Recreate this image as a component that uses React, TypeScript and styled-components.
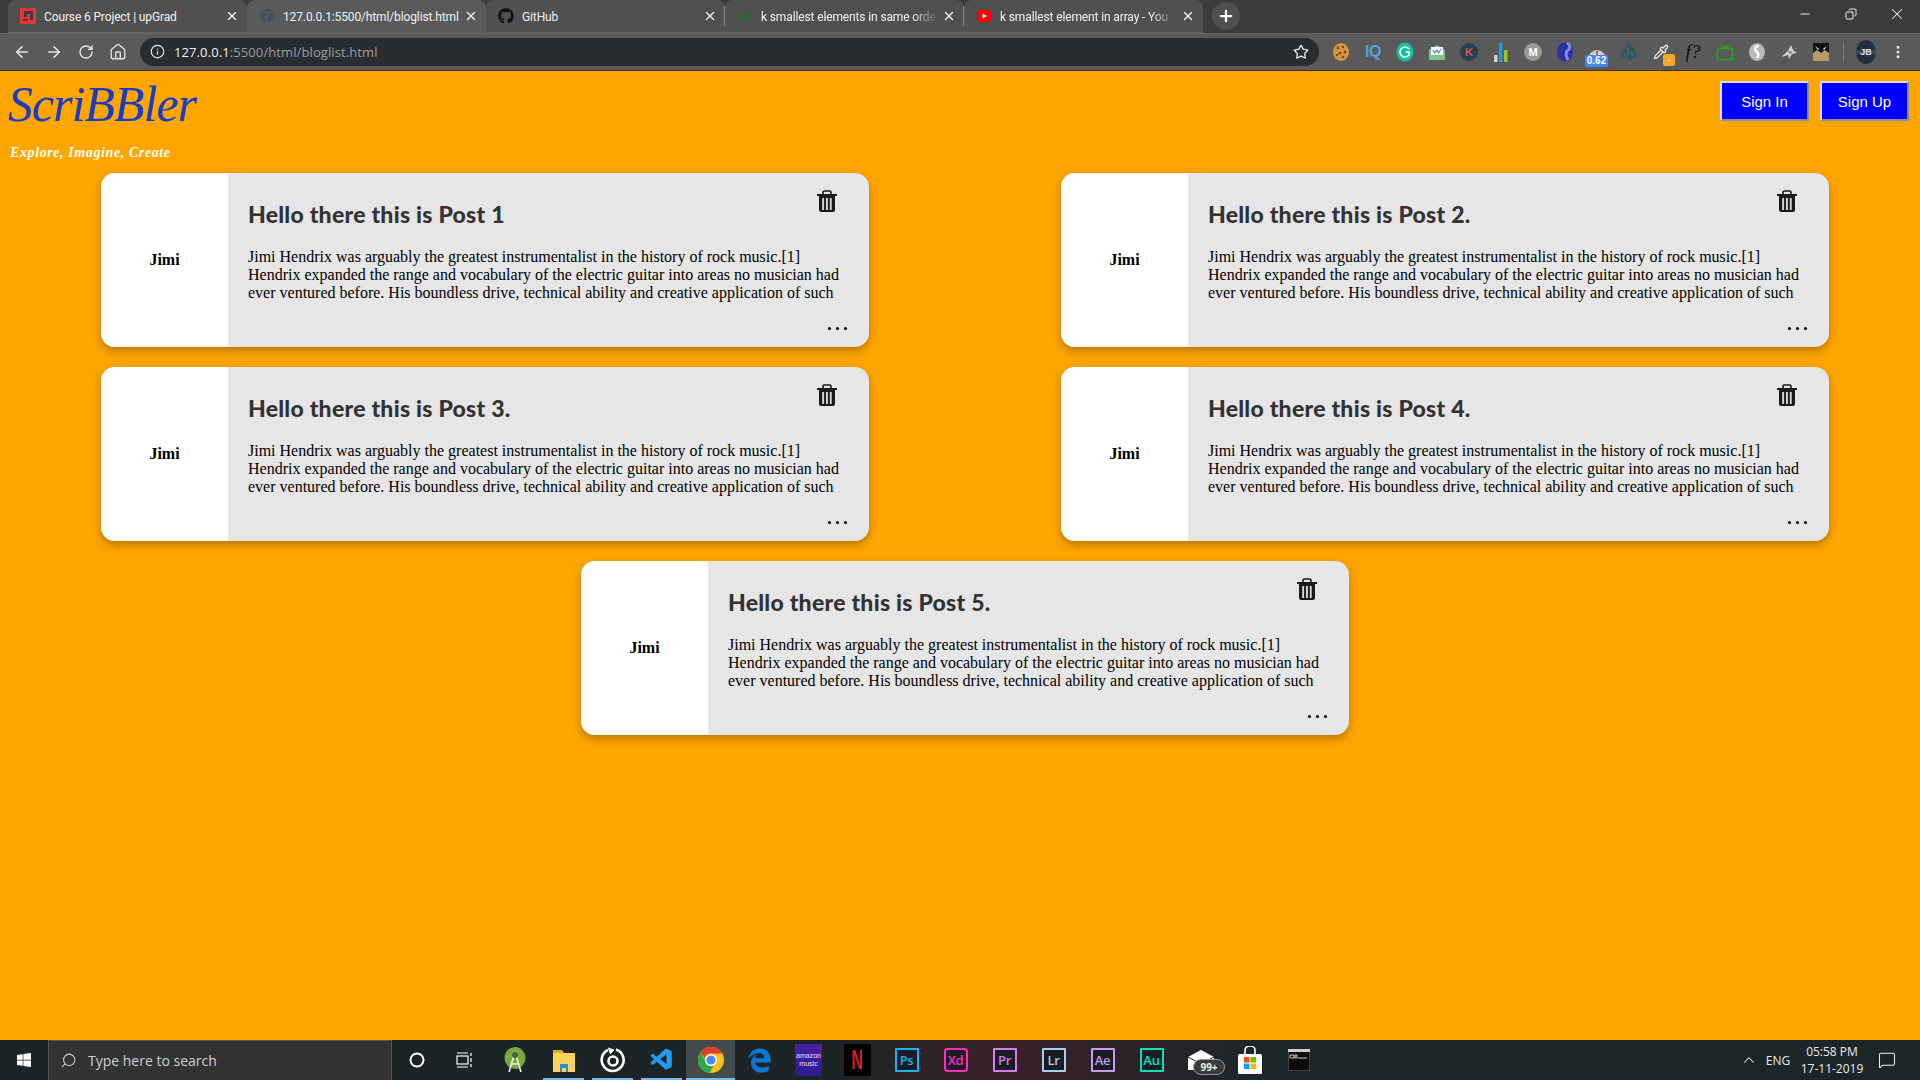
import React from "react";
import styled, { createGlobalStyle } from "styled-components";
import { FaGithub, FaWindows, FaEdgeLegacy } from "react-icons/fa";
import { VscVscode } from "react-icons/vsc";
import {
  ArrowLeft,
  ArrowRight,
  ChevronUp,
  Copy,
  EllipsisVertical,
  Home,
  Info,
  Minus,
  MessageSquare,
  Pipette,
  Plus,
  Recycle,
  RotateCw,
  Search,
  Star,
  Tv,
  X,
} from "lucide-react";

const UI_FONT = `"Open Sans", "Noto Sans", sans-serif`;

const GlobalStyle = createGlobalStyle`
  html, body {
    margin: 0;
    padding: 0;
    overflow: hidden;
    background: #ffa500;
  }
  * {
    box-sizing: border-box;
  }
`;

const Screen = styled.div`
  width: 1920px;
  height: 1080px;
  display: flex;
  flex-direction: column;
`;

/* browser chrome */
const TabStrip = styled.div`
  height: 33px;
  flex-shrink: 0;
  display: flex;
  align-items: stretch;
  padding-left: 8px;
  background: #3c3c3c;
`;

const Tab = styled.div<{ $active?: boolean }>`
  position: relative;
  width: 239px;
  display: flex;
  align-items: center;
  gap: 4px;
  padding: 0 8px 0 12px;
  border-radius: 8px 8px 0 0;
  background: ${({ $active }) => ($active ? "#5a5a5a" : "#505050")};
  border-bottom: 1px solid ${({ $active }) => ($active ? "#5a5a5a" : "#666")};
`;

const TabLabel = styled.span<{ $fade?: boolean }>`
  flex: 1;
  margin-left: 4px;
  padding-top: 2px;
  overflow: hidden;
  white-space: nowrap;
  font-family: Roboto, sans-serif;
  font-size: 12px;
  letter-spacing: -0.13px;
  color: #f2f2f2;
  ${({ $fade }) =>
    $fade &&
    `mask-image: linear-gradient(to right, #000 85%, transparent 100%);`}
`;

const TabDivider = styled.span`
  position: absolute;
  right: 0;
  top: 6px;
  bottom: 6px;
  width: 1px;
  background: #8a8a8a;
`;

const TabIcon = styled.span`
  width: 16px;
  height: 16px;
  flex-shrink: 0;
  display: flex;
  align-items: center;
  justify-content: center;
  color: #111;
`;

const GfgMark = styled.span`
  font-family: "Liberation Sans", sans-serif;
  font-size: 10px;
  font-weight: 700;
  letter-spacing: -1px;
  color: #1d6b3a;
`;

const NewTab = styled.div`
  width: 28px;
  height: 28px;
  margin: 2px 0 0 9px;
  border-radius: 50%;
  background: #505050;
  display: flex;
  align-items: center;
  justify-content: center;
  color: #fff;
`;

const WindowControls = styled.div`
  margin-left: auto;
  display: flex;
  color: #e8e8e8;
`;

const WindowButton = styled.div`
  width: 46px;
  display: flex;
  align-items: center;
  justify-content: center;
  padding-bottom: 5px;
`;

const Toolbar = styled.div`
  height: 38px;
  flex-shrink: 0;
  display: flex;
  align-items: center;
  padding: 0 6px 1px 6px;
  background: #5a5a5a;
  border-top: 1px solid #666;
  border-bottom: 1px solid #333;
`;

const NavButton = styled.div`
  width: 32px;
  display: flex;
  justify-content: center;
  color: #e4e4e4;
`;

const Omnibox = styled.div`
  width: 1179px;
  height: 28px;
  margin-left: 6px;
  padding: 0 10px 0 10px;
  display: flex;
  align-items: center;
  border-radius: 14px;
  background: #292d30;
  color: #e8e8e8;
`;

const UrlText = styled.span`
  margin-left: 9px;
  font-family: ${UI_FONT};
  font-size: 13px;
  letter-spacing: 0.1px;
  color: #f1f1f1;
`;

const UrlMuted = styled.span`
  color: #9a9ea1;
`;

const StarButton = styled.span`
  margin-left: auto;
  display: flex;
`;

const Extensions = styled.div`
  display: flex;
  align-items: center;
  margin-left: 6px;
`;

const Ext = styled.div`
  position: relative;
  width: 32px;
  height: 28px;
  display: flex;
  align-items: center;
  justify-content: center;
`;

const ExtDivider = styled.span`
  width: 1px;
  height: 20px;
  margin: 0 6px 0 6px;
  background: #7a7a7a;
`;

const ExtLetter = styled.span<{ $color: string; $bg?: string }>`
  width: 18px;
  height: 18px;
  display: flex;
  align-items: center;
  justify-content: center;
  border-radius: 50%;
  font-family: "Liberation Sans", sans-serif;
  font-size: 11px;
  font-weight: 700;
  color: ${({ $color }) => $color};
  background: ${({ $bg }) => $bg || "transparent"};
`;

const IqMark = styled.span`
  font-family: "Liberation Sans", sans-serif;
  font-size: 16px;
  font-weight: 700;
  letter-spacing: -0.5px;
  color: #55a2db;
`;

const FormulaMark = styled.span`
  font-family: "Liberation Serif", serif;
  font-style: italic;
  font-size: 19px;
  color: #111;
`;

const SpeedBadge = styled.span`
  position: absolute;
  left: 4px;
  bottom: -1px;
  width: 23px;
  height: 12px;
  border-radius: 2px;
  background: #4285f4;
  color: #fff;
  font-family: "Liberation Sans", sans-serif;
  font-size: 10px;
  font-weight: 700;
  line-height: 12px;
  text-align: center;
`;

const DashBadge = styled.span`
  position: absolute;
  right: 2px;
  bottom: 0;
  width: 12px;
  height: 12px;
  border-radius: 2px;
  background: #f5a623;
  color: #fff;
  font-family: "Liberation Sans", sans-serif;
  font-size: 10px;
  line-height: 12px;
  text-align: center;
`;

/* the page itself */
const Page = styled.main`
  flex: 1;
  min-height: 0;
  background: #ffa500;
`;

const Header = styled.header`
  height: 102px;
  display: flex;
  justify-content: space-between;
  align-items: flex-start;
  padding: 0 11px 0 8px;
`;

const Brand = styled.div`
  display: flex;
  flex-direction: column;
`;

const Logo = styled.h1`
  margin: 0;
  height: 64px;
  font-family: "Liberation Serif", serif;
  font-style: italic;
  font-weight: 400;
  font-size: 50px;
  line-height: 66px;
  letter-spacing: -1px;
  color: #1a3bc4;
`;

const Tagline = styled.p`
  margin: 8px 0 0 2px;
  font-family: "Liberation Serif", serif;
  font-style: italic;
  font-weight: 700;
  font-size: 14px;
  line-height: 20px;
  letter-spacing: 0.6px;
  color: #fff;
`;

const AuthButtons = styled.div`
  display: flex;
  gap: 11px;
  padding-top: 10px;
`;

const AuthButton = styled.button`
  width: 89px;
  height: 40px;
  padding: 0;
  background: #0000ff;
  color: #fff;
  border: 2px solid;
  border-color: #dcdcdc #8f8f8f #8f8f8f #dcdcdc;
  font-family: "Liberation Sans", sans-serif;
  font-size: 15px;
`;

const PostGrid = styled.section`
  display: flex;
  flex-wrap: wrap;
  justify-content: center;
  gap: 20px 192px;
  padding-left: 10px;
`;

const Card = styled.article`
  width: 768px;
  height: 174px;
  display: flex;
  overflow: hidden;
  border-radius: 14px;
  background: #e6e6e6;
  box-shadow: 0 4px 10px rgba(0, 0, 0, 0.28);
`;

const Author = styled.div`
  width: 127px;
  flex-shrink: 0;
  display: flex;
  align-items: center;
  justify-content: center;
  background: #fff;
  font-family: "Liberation Serif", serif;
  font-weight: 700;
  font-size: 16px;
  color: #000;
`;

const CardBody = styled.div`
  flex: 1;
  min-width: 0;
  display: flex;
  flex-direction: column;
  padding: 17px 22px 17px 20px;
`;

const CardHead = styled.div`
  display: flex;
  justify-content: space-between;
  align-items: flex-start;
  padding-right: 10px;
`;

const Title = styled.h2`
  margin: 11px 0 0;
  font-family: Lato, sans-serif;
  font-weight: 900;
  font-size: 23px;
  line-height: 27px;
  letter-spacing: 0.25px;
  color: #333;
`;

const Excerpt = styled.p`
  width: 600px;
  margin: 20px 0 0;
  font-family: "Liberation Serif", serif;
  font-size: 16px;
  line-height: 18px;
  color: #000;
`;

const DotRow = styled.div`
  margin-top: auto;
  display: flex;
  justify-content: flex-end;
  gap: 5px;
`;

const Dot = styled.span`
  width: 3px;
  height: 3px;
  border-radius: 50%;
  background: #000;
`;

/* windows taskbar */
const Taskbar = styled.footer`
  height: 40px;
  flex-shrink: 0;
  display: flex;
  align-items: stretch;
  background: linear-gradient(
    to right,
    #1c2426 0%,
    #1c2426 44%,
    #3a2128 52%,
    #33222a 56%,
    #1c2629 66%,
    #1c2629 100%
  );
  color: #fff;
`;

const StartButton = styled.div`
  width: 48px;
  display: flex;
  align-items: center;
  justify-content: center;
`;

const SearchBox = styled.div`
  width: 344px;
  display: flex;
  align-items: center;
  gap: 11px;
  padding-left: 11px;
  background: #333;
  border: 1px solid #565656;
  border-bottom: none;
  font-family: ${UI_FONT};
  font-size: 14px;
  color: #d0d0d0;
`;

const TaskItem = styled.div<{ $running?: boolean; $active?: boolean }>`
  position: relative;
  width: 49px;
  display: flex;
  align-items: center;
  justify-content: center;
  background: ${({ $active }) => ($active ? "rgba(255,255,255,0.18)" : "transparent")};
  &::after {
    content: "";
    display: ${({ $running }) => ($running ? "block" : "none")};
    position: absolute;
    left: ${({ $active }) => ($active ? "0" : "4px")};
    right: ${({ $active }) => ($active ? "0" : "4px")};
    bottom: 0;
    height: 2px;
    background: #76b9ed;
  }
`;

const TaskViewSlot = styled.span`
  display: flex;
  margin-right: 4px;
`;

const AdobeTile = styled.span<{ $color: string }>`
  width: 24px;
  height: 24px;
  display: flex;
  align-items: center;
  justify-content: center;
  border: 2px solid ${({ $color }) => $color};
  border-radius: ${({ $color }) => ($color === "#ff2bc2" ? "4px" : "1px")};
  background: #1a1c24;
  color: ${({ $color }) => $color};
  font-family: ${UI_FONT};
  font-size: 13px;
  font-weight: 600;
  letter-spacing: -0.3px;
`;

const MusicTile = styled.span`
  width: 27px;
  height: 32px;
  display: flex;
  flex-direction: column;
  align-items: center;
  justify-content: center;
  background: linear-gradient(#4a1fa8, #2c1a8a);
  color: #e6e0ff;
  font-family: "Liberation Sans", sans-serif;
  font-size: 7px;
  line-height: 8px;
`;

const NetflixTile = styled.span`
  width: 27px;
  height: 32px;
  display: flex;
  align-items: center;
  justify-content: center;
  background: #000;
`;

const NetflixLetter = styled.span`
  display: inline-block;
  transform: scale(0.62, 1.05);
  color: #d81f26;
  font-family: "Liberation Sans", sans-serif;
  font-size: 26px;
  font-weight: 700;
`;

const MailBadge = styled.span`
  position: absolute;
  left: 17px;
  top: 19px;
  width: 32px;
  height: 16px;
  border-radius: 8px;
  border: 1px solid #9a9a9a;
  background: #3a3a3a;
  color: #eee;
  font-family: ${UI_FONT};
  font-size: 10px;
  font-weight: 700;
  line-height: 14px;
  text-align: center;
`;

const Tray = styled.div`
  margin-left: auto;
  display: flex;
  align-items: center;
  padding-right: 15px;
  font-family: ${UI_FONT};
  font-size: 12px;
  color: #ececec;
`;

const TrayIcon = styled.span`
  width: 24px;
  display: flex;
  justify-content: center;
`;

const TrayLang = styled.span`
  width: 34px;
  text-align: center;
`;

const Clock = styled.div`
  width: 74px;
  text-align: center;
  line-height: 17px;
`;

const NotifyIcon = styled.span`
  width: 36px;
  display: flex;
  justify-content: center;
`;

const TrashIcon = () => (
  <svg width="20" height="22" viewBox="0 0 20 22">
    <path d="M6 4V2.4C6 1.6 6.6 1 7.4 1h5.2c.8 0 1.4.6 1.4 1.4V4" fill="none" stroke="#1a1a1a" strokeWidth="1.6" />
    <rect x="0" y="4" width="20" height="2" fill="#1a1a1a" />
    <path d="M2 6h16v14c0 1.1-.9 2-2 2H4c-1.1 0-2-.9-2-2z" fill="#1a1a1a" />
    <rect x="5.2" y="8" width="1.9" height="12" fill="#d8d8d8" />
    <rect x="9" y="8" width="1.9" height="12" fill="#d8d8d8" />
    <rect x="12.8" y="8" width="1.9" height="12" fill="#d8d8d8" />
  </svg>
);

const UpgradIcon = () => (
  <svg width="16" height="16" viewBox="0 0 16 16">
    <rect width="16" height="16" fill="#e8353b" />
    <path d="M4 3h9v9h-3V6H7v3H4zM3 11h5v2H3z" fill="#3c3c3c" />
  </svg>
);

const GlobeIcon = () => (
  <svg width="16" height="16" viewBox="0 0 16 16">
    <circle cx="8" cy="8" r="7" fill="#4a5058" />
    <path d="M4 4c3 0 5 1 5 3S6 9 6 11l3 3M11 2c-1 2 1 3 2 4" fill="none" stroke="#5a5a5a" strokeWidth="1.4" />
  </svg>
);

const YoutubeIcon = () => (
  <svg width="16" height="16" viewBox="0 0 16 16">
    <rect x="1" y="2" width="14" height="12" rx="3" fill="#f00" />
    <path d="M6.5 5.5 11 8l-4.5 2.5z" fill="#fff" />
  </svg>
);

const CookieIcon = () => (
  <svg width="18" height="20" viewBox="0 0 18 20">
    <ellipse cx="9" cy="10" rx="8" ry="9" fill="#d8963f" />
    <circle cx="6" cy="6" r="1.4" fill="#7a4414" />
    <circle cx="11" cy="5" r="1.2" fill="#7a4414" />
    <circle cx="13" cy="10" r="1.4" fill="#7a4414" />
    <circle cx="8" cy="11" r="1.5" fill="#7a4414" />
    <circle cx="5" cy="13" r="1.2" fill="#7a4414" />
    <circle cx="11" cy="15" r="1.3" fill="#7a4414" />
  </svg>
);

const GrammarlyIcon = () => (
  <svg width="18" height="20" viewBox="0 0 18 20">
    <ellipse cx="9" cy="10" rx="8.5" ry="9.5" fill="#15c39a" />
    <path d="M13 7a5 5 0 1 0 0 6v-3H9.5" fill="none" stroke="#fff" strokeWidth="1.6" />
  </svg>
);

const MailCheckIcon = () => (
  <svg width="18" height="18" viewBox="0 0 18 18">
    <path d="M1 7l8-5 8 5v10H1z" fill="#7cc48a" />
    <rect x="3" y="4" width="12" height="8" fill="#fff" />
    <path d="M5 7l1.5 3L9 7l1.5 3L13 6" fill="none" stroke="#6a7fd8" strokeWidth="1.2" />
  </svg>
);

const BarsIcon = () => (
  <svg width="14" height="20" viewBox="0 0 14 20">
    <rect x="0" y="13" width="3.5" height="7" fill="#d0d0d0" />
    <rect x="5" y="1" width="3.5" height="19" fill="#1e9be8" />
    <rect x="10" y="8" width="3.5" height="12" fill="#9ac31c" />
  </svg>
);

const SwooshIcon = () => (
  <svg width="16" height="20" viewBox="0 0 16 20">
    <ellipse cx="8" cy="10" rx="8" ry="9.5" fill="#2f2fa0" />
    <path d="M10 1c4 2 3 6 1 7s-3 5 0 10" fill="none" stroke="#7f8cf0" strokeWidth="3" />
  </svg>
);

const GaugeIcon = () => (
  <svg width="20" height="14" viewBox="0 0 20 14">
    <path d="M1 14a9 9 0 0 1 18 0z" fill="#c9c9c9" />
    <path d="M4 14a6 6 0 0 1 12 0z" fill="#eee" />
    <path d="M10 13V6" stroke="#a33" strokeWidth="1.5" />
  </svg>
);

const GreyLeafIcon = () => (
  <svg width="16" height="18" viewBox="0 0 16 18">
    <ellipse cx="8" cy="9" rx="8" ry="9" fill="#b9b9b9" />
    <path d="M10 3C6 3 5 6 7 8s4 3 1 7" fill="none" stroke="#fff" strokeWidth="2.4" />
  </svg>
);

const SharkIcon = () => (
  <svg width="18" height="18" viewBox="0 0 18 18">
    <path d="M1 14 8 8l3-6 2 5 4 3-5 1-3 5-1-4z" fill="#cfcfcf" />
    <path d="M8 8l5 1-3 2z" fill="#777" />
  </svg>
);

const BlackTanIcon = () => (
  <svg width="16" height="18" viewBox="0 0 16 18">
    <rect width="16" height="18" fill="#111" />
    <path d="M0 18V10l4-3 4 3 4-3 4 3v8z" fill="#b59a6a" />
    <path d="M2 3l4 3-1 1zM14 3l-4 3 1 1z" fill="#fff" />
  </svg>
);

const AvatarIcon = () => (
  <svg width="20" height="24" viewBox="0 0 20 24">
    <ellipse cx="10" cy="12" rx="10" ry="12" fill="#20303c" />
    <rect y="10" width="20" height="4" fill="#3c4a56" />
    <text x="10" y="15" textAnchor="middle" fontFamily="Liberation Sans" fontSize="9" fontWeight="700" fill="#dfe6ea">JB</text>
  </svg>
);

const TaskViewIcon = () => (
  <svg width="16" height="18" viewBox="0 0 16 18" fill="none" stroke="#fff" strokeWidth="1.2">
    <rect x="1" y="5" width="11" height="8" />
    <path d="M1 2h11M1 16h11M15 2v3M15 7v4M15 13v3" />
  </svg>
);

const AndroidStudioIcon = () => (
  <svg width="22" height="26" viewBox="0 0 22 26">
    <ellipse cx="11" cy="11" rx="10.5" ry="11" fill="#78a93f" />
    <path d="M11 5 5 25M11 5l6 20M7 17h8" fill="none" stroke="#eef3e2" strokeWidth="1.6" />
    <circle cx="11" cy="8" r="3" fill="#4c5f36" />
  </svg>
);

const FolderIcon = () => (
  <svg width="22" height="24" viewBox="0 0 22 24">
    <path d="M0 2h9l2 3h11v19H0z" fill="#e9a825" />
    <rect y="5" width="22" height="19" fill="#fbd25a" />
    <rect x="7" y="16" width="8" height="8" fill="#2a8fd8" />
    <rect x="9" y="20" width="4" height="4" fill="#fbd25a" />
  </svg>
);

const RingIcon = () => (
  <svg width="26" height="26" viewBox="0 0 26 26" fill="none" stroke="#fff">
    <path d="M16 2.5A11 11 0 1 1 8 3" strokeWidth="2.6" />
    <circle cx="13" cy="14" r="4.5" strokeWidth="2.6" />
    <path d="M8 1l6 2-4 4" fill="#fff" strokeWidth="1" />
  </svg>
);

const ChromeIcon = () => (
  <svg width="26" height="26" viewBox="0 0 26 26">
    <circle cx="13" cy="13" r="13" fill="#fbc116" />
    <path d="M13 0a13 13 0 0 1 11.3 6.5H13A6.5 6.5 0 0 0 6.8 11L2.6 5.2A13 13 0 0 1 13 0z" fill="#e33b2e" />
    <path d="M2.6 5.2 8 14.6a6.5 6.5 0 0 0 7.4 4.4l-3.6 7A13 13 0 0 1 2.6 5.2z" fill="#2fa84f" />
    <circle cx="13" cy="13" r="6" fill="#fff" />
    <circle cx="13" cy="13" r="4.6" fill="#4c8bf5" />
  </svg>
);

const MailIcon = () => (
  <svg width="26" height="20" viewBox="0 0 26 20">
    <path d="M0 7 13 0l13 7v13H0z" fill="#fff" />
    <path d="M0 7l13 7 13-7" fill="none" stroke="#1c2629" strokeWidth="1" />
  </svg>
);

const StoreIcon = () => (
  <svg width="24" height="28" viewBox="0 0 24 28">
    <path d="M7 8V4a5 4 0 0 1 10 0v4" fill="none" stroke="#fff" strokeWidth="1.6" />
    <rect y="8" width="24" height="20" rx="1.5" fill="#fff" />
    <rect x="6" y="11" width="5.5" height="5.5" fill="#f25022" />
    <rect x="12.5" y="11" width="5.5" height="5.5" fill="#7fba00" />
    <rect x="6" y="17.5" width="5.5" height="5.5" fill="#00a4ef" />
    <rect x="12.5" y="17.5" width="5.5" height="5.5" fill="#ffb900" />
  </svg>
);

const TerminalIcon = () => (
  <svg width="22" height="22" viewBox="0 0 22 22">
    <rect width="22" height="22" fill="#0c0c0c" stroke="#777" />
    <rect width="22" height="3" fill="#cfcfcf" />
    <path d="M2 6h4v3H2zM7 6h2v3H7zM10 9h9" fill="none" stroke="#cfcfcf" strokeWidth="1" />
  </svg>
);

const POST_TEXT =
  "Jimi Hendrix was arguably the greatest instrumentalist in the history of rock music.[1] Hendrix expanded the range and vocabulary of the electric guitar into areas no musician had ever ventured before. His boundless drive, technical ability and creative application of such";

const POSTS = [
  "Hello there this is Post 1",
  "Hello there this is Post 2.",
  "Hello there this is Post 3.",
  "Hello there this is Post 4.",
  "Hello there this is Post 5.",
];

const TABS = [
  { label: "Course 6 Project | upGrad", icon: <UpgradIcon /> },
  { label: "127.0.0.1:5500/html/bloglist.html", icon: <GlobeIcon />, active: true },
  { label: "GitHub", icon: <FaGithub size={16} />, divider: true },
  { label: "k smallest elements in same orde", icon: <GfgMark>GG</GfgMark>, fade: true, divider: true },
  { label: "k smallest element in array - You", icon: <YoutubeIcon />, fade: true },
];

const ADOBE_APPS = [
  { name: "Ps", color: "#18b4f0" },
  { name: "Xd", color: "#ff2bc2" },
  { name: "Pr", color: "#d67bf0" },
  { name: "Lr", color: "#a9cfe8" },
  { name: "Ae", color: "#c79bf2" },
  { name: "Au", color: "#00e4bb" },
];

const App: React.FC = () => (
  <Screen>
    <GlobalStyle />
    <TabStrip>
      {TABS.map((tab) => (
        <Tab key={tab.label} $active={tab.active}>
          <TabIcon>{tab.icon}</TabIcon>
          <TabLabel $fade={tab.fade}>{tab.label}</TabLabel>
          <X size={14} color="#f0f0f0" strokeWidth={2.4} />
          {tab.divider && <TabDivider />}
        </Tab>
      ))}
      <NewTab>
        <Plus size={18} strokeWidth={3} />
      </NewTab>
      <WindowControls>
        <WindowButton><Minus size={14} /></WindowButton>
        <WindowButton><Copy size={12} style={{ transform: "scaleX(-1)" }} /></WindowButton>
        <WindowButton><X size={18} strokeWidth={1.4} /></WindowButton>
      </WindowControls>
    </TabStrip>

    <Toolbar>
      <NavButton><ArrowLeft size={18} strokeWidth={2.2} /></NavButton>
      <NavButton><ArrowRight size={18} strokeWidth={2.2} /></NavButton>
      <NavButton><RotateCw size={16} strokeWidth={2.2} /></NavButton>
      <NavButton><Home size={18} strokeWidth={1.8} /></NavButton>
      <Omnibox>
        <Info size={15} />
        <UrlText>
          127.0.0.1<UrlMuted>:5500/html/bloglist.html</UrlMuted>
        </UrlText>
        <StarButton><Star size={16} /></StarButton>
      </Omnibox>
      <Extensions>
        <Ext><CookieIcon /></Ext>
        <Ext><IqMark>IQ</IqMark></Ext>
        <Ext><GrammarlyIcon /></Ext>
        <Ext><MailCheckIcon /></Ext>
        <Ext><ExtLetter $color="#d9534f" $bg="#2c3e50">K</ExtLetter></Ext>
        <Ext><BarsIcon /></Ext>
        <Ext><ExtLetter $color="#fff" $bg="#9b9b9b">M</ExtLetter></Ext>
        <Ext><SwooshIcon /></Ext>
        <Ext><GaugeIcon /><SpeedBadge>0.62</SpeedBadge></Ext>
        <Ext><Recycle size={18} color="#1f5c66" strokeWidth={2.6} /></Ext>
        <Ext><Pipette size={16} color="#e8e8e8" /><DashBadge>-</DashBadge></Ext>
        <Ext><FormulaMark>f?</FormulaMark></Ext>
        <Ext><Tv size={18} color="#1ea51e" strokeWidth={2.2} /></Ext>
        <Ext><GreyLeafIcon /></Ext>
        <Ext><SharkIcon /></Ext>
        <Ext><BlackTanIcon /></Ext>
        <ExtDivider />
        <Ext><AvatarIcon /></Ext>
        <Ext><EllipsisVertical size={16} color="#e4e4e4" strokeWidth={2.6} /></Ext>
      </Extensions>
    </Toolbar>

    <Page>
      <Header>
        <Brand>
          <Logo>ScriBBler</Logo>
          <Tagline>Explore, Imagine, Create</Tagline>
        </Brand>
        <AuthButtons>
          <AuthButton>Sign In</AuthButton>
          <AuthButton>Sign Up</AuthButton>
        </AuthButtons>
      </Header>
      <PostGrid>
        {POSTS.map((title) => (
          <Card key={title}>
            <Author>Jimi</Author>
            <CardBody>
              <CardHead>
                <Title>{title}</Title>
                <TrashIcon />
              </CardHead>
              <Excerpt>{POST_TEXT}</Excerpt>
              <DotRow>
                <Dot />
                <Dot />
                <Dot />
              </DotRow>
            </CardBody>
          </Card>
        ))}
      </PostGrid>
    </Page>

    <Taskbar>
      <StartButton><FaWindows size={16} /></StartButton>
      <SearchBox>
        <Search size={17} strokeWidth={1.5} style={{ transform: "scaleX(-1)" }} />
        Type here to search
      </SearchBox>
      <TaskItem>
        <svg width="16" height="16" viewBox="0 0 16 16"><circle cx="8" cy="8" r="6.5" fill="none" stroke="#fff" strokeWidth="2" /></svg>
      </TaskItem>
      <TaskItem><TaskViewSlot><TaskViewIcon /></TaskViewSlot></TaskItem>
      <TaskItem><AndroidStudioIcon /></TaskItem>
      <TaskItem $running><FolderIcon /></TaskItem>
      <TaskItem $running><RingIcon /></TaskItem>
      <TaskItem $running><VscVscode size={26} color="#1f9cf0" /></TaskItem>
      <TaskItem $running $active><ChromeIcon /></TaskItem>
      <TaskItem><FaEdgeLegacy size={25} color="#0a78d4" /></TaskItem>
      <TaskItem><MusicTile><span>amazon</span><span>music</span></MusicTile></TaskItem>
      <TaskItem><NetflixTile><NetflixLetter>N</NetflixLetter></NetflixTile></TaskItem>
      {ADOBE_APPS.map((app) => (
        <TaskItem key={app.name}><AdobeTile $color={app.color}>{app.name}</AdobeTile></TaskItem>
      ))}
      <TaskItem><MailIcon /><MailBadge>99+</MailBadge></TaskItem>
      <TaskItem><StoreIcon /></TaskItem>
      <TaskItem><TerminalIcon /></TaskItem>
      <Tray>
        <TrayIcon><ChevronUp size={18} strokeWidth={1.4} /></TrayIcon>
        <TrayLang>ENG</TrayLang>
        <Clock>05:58 PM<br />17-11-2019</Clock>
        <NotifyIcon><MessageSquare size={18} strokeWidth={1.4} /></NotifyIcon>
      </Tray>
    </Taskbar>
  </Screen>
);

export default App;
